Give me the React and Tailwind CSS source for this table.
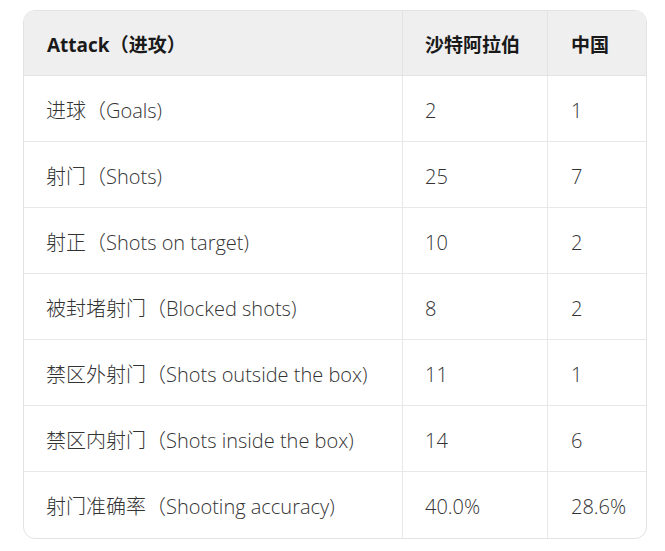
import React from "react";

const rows = [
  ["进球（Goals)", "2", "1"],
  ["射门（Shots)", "25", "7"],
  ["射正（Shots on target)", "10", "2"],
  ["被封堵射门（Blocked shots)", "8", "2"],
  ["禁区外射门（Shots outside the box)", "11", "1"],
  ["禁区内射门（Shots inside the box)", "14", "6"],
  ["射门准确率（Shooting accuracy)", "40.0%", "28.6%"],
];

export default function App() {
  return (
    <div
      className="w-[665px] h-[551px] bg-white pt-[10px] pl-[23px]"
      style={{ fontFamily: '"Open Sans", "Noto Sans CJK SC", sans-serif' }}
    >
      <div className="w-[624px] border border-[#e3e3e3] rounded-[12px] overflow-hidden">
        <div className="grid grid-cols-[378px_145px_99px] h-[65px] bg-[#efefef] border-b border-[#e3e3e3] text-[19px] font-bold text-[#1a1a1a]">
          <div className="flex items-center pl-[23px] pt-[4px]">Attack（进攻）</div>
          <div className="flex items-center pl-[22px] pt-[4px] border-l border-[#e3e3e3]">沙特阿拉伯</div>
          <div className="flex items-center pl-[23px] pt-[4px] border-l border-[#e3e3e3]">中国</div>
        </div>
        {rows.map((r, i) => (
          <div
            key={i}
            className={`grid grid-cols-[378px_145px_99px] h-[66px] text-[20px] font-light text-[#333333] ${
              i < rows.length - 1 ? "border-b border-[#e8e8e8]" : ""
            }`}
          >
            <div className="flex items-center pl-[22px] pt-[4px]">{r[0]}</div>
            <div className="flex items-center pl-[22px] pt-[4px] border-l border-[#e8e8e8]">{r[1]}</div>
            <div className="flex items-center pl-[23px] pt-[4px] border-l border-[#e8e8e8]">{r[2]}</div>
          </div>
        ))}
      </div>
    </div>
  );
}
